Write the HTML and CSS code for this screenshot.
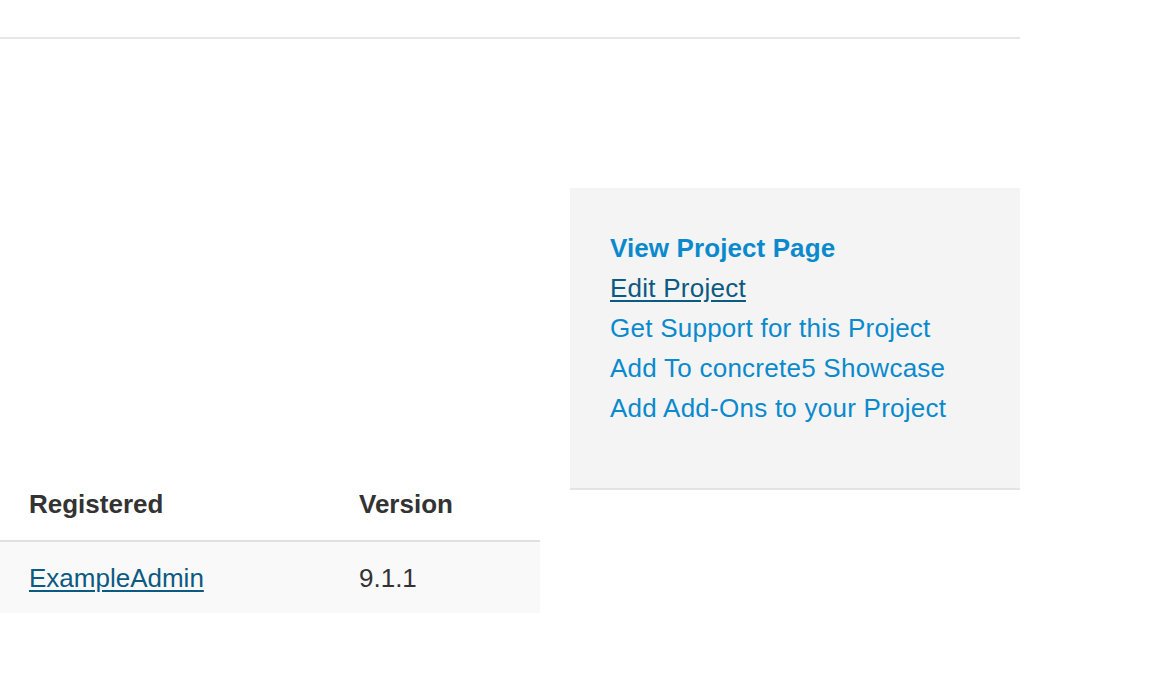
FILE: index.html
```html
<!DOCTYPE html>
<html lang="en">
<head>
    <meta charset="UTF-8">
    <meta name="viewport" content="width=device-width, initial-scale=1.0">
    <title>Project</title>
    <link rel="stylesheet" href="styles.css">
</head>
<body>
    <div class="page">
        <hr class="rule">

        <div class="content">
            <div class="main">
                <table class="sites">
                    <thead>
                        <tr>
                            <th class="col-user">Registered</th>
                            <th>Version</th>
                        </tr>
                    </thead>
                    <tbody>
                        <tr>
                            <td class="col-user"><a href="#" class="user-link">ExampleAdmin</a></td>
                            <td>9.1.1</td>
                        </tr>
                    </tbody>
                </table>
            </div>

            <div class="sidebar">
                <ul class="actions">
                    <li><a href="#" class="strong">View Project Page</a></li>
                    <li><a href="#" class="active">Edit Project</a></li>
                    <li><a href="#">Get Support for this Project</a></li>
                    <li><a href="#">Add To concrete5 Showcase</a></li>
                    <li><a href="#">Add Add-Ons to your Project</a></li>
                </ul>
            </div>
        </div>
    </div>
</body>
</html>
```

FILE: styles.css
```css
body {
    font-family: "Liberation Sans", Arial, Helvetica, sans-serif;
    font-size: 26px;
    color: #333;
    margin: 0;
    padding: 0;
    background-color: #fff;
}
.page {
    width: 1020px;
}
.rule {
    margin: 37px 0 0;
    border: none;
    border-top: 2px solid #e6e6e6;
}
.content {
    display: grid;
    grid-template-columns: 540px 450px;
    column-gap: 30px;
    margin-top: 149px;
}
.main {
    padding-top: 280px;
}
.sites {
    width: 100%;
    border-collapse: collapse;
}
.sites th,
.sites td {
    text-align: left;
    padding: 0 0 0 29px;
    vertical-align: middle;
}
.sites th {
    font-weight: bold;
    height: 72px;
    border-bottom: 2px solid #e0e0e0;
}
.sites td {
    height: 70px;
    padding-top: 1px;
    background-color: #f9f9f9;
}
.sites .col-user {
    width: 301px;
}
.user-link {
    color: #0b5a82;
    text-decoration: underline;
    text-underline-offset: 3px;
}
.sidebar {
    background-color: #f4f4f4;
    border-bottom: 2px solid #e3e3e3;
    padding: 40px 40px 60px;
    align-self: start;
}
.actions {
    list-style: none;
    margin: 0;
    padding: 0;
}
.actions li {
    line-height: 40px;
}
.actions a {
    color: #0a8acd;
    text-decoration: none;
    letter-spacing: 0.25px;
}
.actions a.strong {
    font-weight: bold;
    letter-spacing: 0.1px;
}
.actions a.active {
    color: #0b5a82;
    text-decoration: underline;
    text-underline-offset: 3px;
}
```
